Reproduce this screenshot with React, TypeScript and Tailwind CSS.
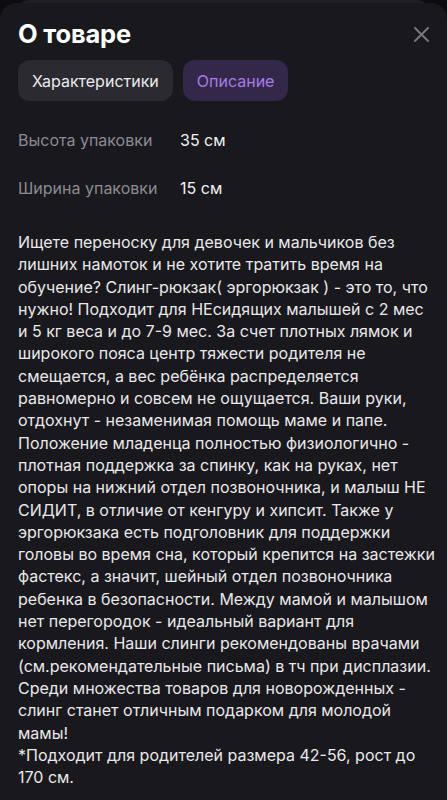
import React from "react";

const lines = [
  "Ищете переноску для девочек и мальчиков без",
  "лишних намоток и не хотите тратить время на",
  "обучение? Слинг-рюкзак( эргорюкзак ) - это то, что",
  "нужно! Подходит для НЕсидящих малышей с 2 мес",
  "и 5 кг веса и до 7-9 мес. За счет плотных лямок и",
  "широкого пояса центр тяжести родителя не",
  "смещается, а вес ребёнка распределяется",
  "равномерно и совсем не ощущается. Ваши руки,",
  "отдохнут - незаменимая помощь маме и папе.",
  "Положение младенца полностью физиологично -",
  "плотная поддержка за спинку, как на руках, нет",
  "опоры на нижний отдел позвоночника, и малыш НЕ",
  "СИДИТ, в отличие от кенгуру и хипсит. Также у",
  "эргорюкзака есть подголовник для поддержки",
  "головы во время сна, который крепится на застежки",
  "фастекс, а значит, шейный отдел позвоночника",
  "ребенка в безопасности. Между мамой и малышом",
  "нет перегородок - идеальный вариант для",
  "кормления. Наши слинги рекомендованы врачами",
  "(см.рекомендательные письма) в тч при дисплазии.",
  "Среди множества товаров для новорожденных -",
  "слинг станет отличным подарком для молодой",
  "мамы!",
  "*Подходит для родителей размера 42-56, рост до",
  "170 см.",
];

export default function App() {
  return (
    <div className="w-[447px] h-[800px] bg-[#0c0c0e] overflow-hidden relative" style={{ fontFamily: "Inter, 'Noto Sans', sans-serif" }}>
      <div className="absolute top-0 left-[18px] right-[19px] h-[10px] rounded-t-[12px] bg-[#1f1e23]" />
      <div className="absolute top-[3px] left-0 right-0 bottom-0 rounded-t-[16px] bg-[#19181d] px-[18px]">
        <div className="flex items-center justify-between pt-[15px] h-[47px]">
          <h1 className="text-[25.5px] leading-[30px] font-bold text-white tracking-[-0.2px]">О товаре</h1>
          <svg width="17" height="17" viewBox="0 0 17 17" className="mr-[-1px]">
            <path d="M2 2L15 15M15 2L2 15" stroke="#77767d" strokeWidth="2" strokeLinecap="round" />
          </svg>
        </div>
        <div className="flex gap-[10px] mt-[10px]">
          <div className="h-[41px] px-[14px] rounded-[12px] bg-[#2b2a30] flex items-center text-[16px] text-[#ececee]">Характеристики</div>
          <div className="h-[41px] px-[14px] rounded-[12px] bg-[#33284a] flex items-center text-[16px] text-[#a97ce4]">Описание</div>
        </div>
        <div className="mt-[27px] flex flex-col gap-[24px] text-[16px]">
          <div className="flex items-center h-[24px]">
            <span className="w-[162px] text-[#8c8b93]">Высота упаковки</span>
            <span className="text-[#f2f2f3]">35 см</span>
          </div>
          <div className="flex items-center h-[24px]">
            <span className="w-[162px] text-[#8c8b93]">Ширина упаковки</span>
            <span className="text-[#f2f2f3]">15 см</span>
          </div>
        </div>
        <div className="mt-[31px] text-[16px] leading-[22.3px] text-[#e9e9eb]">
          {lines.map((l, i) => (
            <div key={i} className="whitespace-nowrap">{l}</div>
          ))}
        </div>
      </div>
    </div>
  );
}
